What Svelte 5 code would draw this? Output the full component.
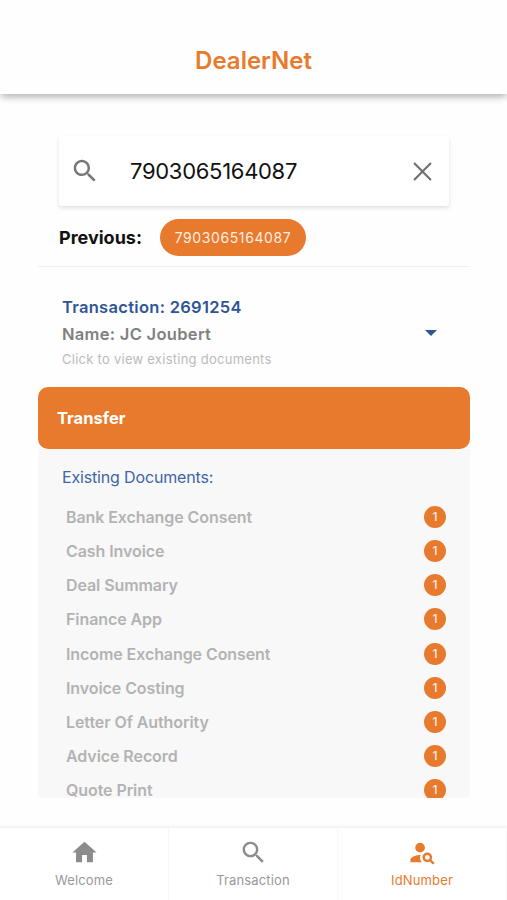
<script>
	let query = "7903065164087"
	let previous = ["7903065164087"]
	let activeTab = "IdNumber"

	const transaction = {
		number: "2691254",
		name: "JC Joubert",
		status: "Transfer",
	}

	const documents = [
		{name: "Bank Exchange Consent", count: 1},
		{name: "Cash Invoice", count: 1},
		{name: "Deal Summary", count: 1},
		{name: "Finance App", count: 1},
		{name: "Income Exchange Consent", count: 1},
		{name: "Invoice Costing", count: 1},
		{name: "Letter Of Authority", count: 1},
		{name: "Advice Record", count: 1},
		{name: "Quote Print", count: 1},
	]

	const searchPath =
		"M15.5 14h-.79l-.28-.27C15.41 12.59 16 11.11 16 9.5 16 5.91 13.09 3 9.5 3S3 5.91 3 9.5 5.91 16 9.5 16c1.61 0 3.09-.59 4.23-1.57l.27.28v.79l5 4.99L20.49 19l-4.99-5zm-6 0C7.01 14 5 11.99 5 9.5S7.01 5 9.5 5 14 7.01 14 9.5 11.99 14 9.5 14z"

	const tabs = [
		{label: "Welcome", path: "M10 20v-6h4v6h5v-8h3L12 3 2 12h3v8z"},
		{label: "Transaction", path: searchPath},
		{
			label: "IdNumber",
			path: "M10 4a4 4 0 1 0 0 8 4 4 0 0 0 0-8zM10.35 14.01C7.62 13.91 2 15.27 2 18v2h9.54c-2.47-2.76-1.23-5.89-1.19-5.99zM19.43 18.02c.36-.59.57-1.28.57-2.02 0-2.21-1.79-4-4-4s-4 1.79-4 4 1.79 4 4 4c.74 0 1.43-.22 2.02-.57L20.59 22 22 20.59l-2.57-2.57zM16 18c-1.1 0-2-.9-2-2s.9-2 2-2 2 .9 2 2-.9 2-2 2z",
		},
	]
</script>

<div class="app">
	<header>
		<h1>DealerNet</h1>
	</header>

	<main>
		<div class="search">
			<svg class="search-icon" viewBox="0 0 24 24"><path d={searchPath} /></svg>
			<input type="text" aria-label="Id number" bind:value={query} />
			<button class="clear" aria-label="Clear" on:click={() => (query = "")}>
				<svg viewBox="0 0 18 18"><path d="M1 1l16 16M17 1L1 17" /></svg>
			</button>
		</div>

		<div class="previous">
			<span class="previous-label">Previous:</span>
			{#each previous as id}
				<button class="chip" on:click={() => (query = id)}>{id}</button>
			{/each}
		</div>

		<section class="results">
			<div class="transaction">
				<div>
					<div class="number">Transaction: {transaction.number}</div>
					<div class="name">Name: {transaction.name}</div>
					<div class="hint">Click to view existing documents</div>
				</div>
				<span class="caret"></span>
			</div>

			<div class="status">{transaction.status}</div>

			<div class="documents">
				<h2>Existing Documents:</h2>
				<ul>
					{#each documents as doc}
						<li>
							<span>{doc.name}</span>
							<span class="badge">{doc.count}</span>
						</li>
					{/each}
				</ul>
			</div>
		</section>
	</main>

	<nav>
		{#each tabs as tab}
			<button
				class="tab"
				class:active={tab.label === activeTab}
				on:click={() => (activeTab = tab.label)}
			>
				<svg viewBox="0 0 24 24"><path d={tab.path} /></svg>
				<span>{tab.label}</span>
			</button>
		{/each}
	</nav>
</div>

<style>
	:global(body) {
		margin: 0;
	}

	.app {
		display: flex;
		flex-direction: column;
		height: 900px;
		overflow: hidden;
		background: #fefefe;
		font-family: Inter, "Liberation Sans", sans-serif;
	}

	.app * {
		box-sizing: border-box;
	}

	button {
		padding: 0;
		border: none;
		background: none;
		font-family: inherit;
	}

	header {
		flex: none;
		height: 94px;
		padding-top: 45px;
		background: #fefefe;
		box-shadow: 0 4px 7px -1px rgba(0, 0, 0, 0.3);
		text-align: center;
	}

	h1 {
		margin: 0;
		color: #e87a2e;
		font-size: 24px;
		font-weight: 600;
		line-height: 32px;
	}

	main {
		display: flex;
		flex: 1;
		flex-direction: column;
		min-height: 0;
		padding: 42px 37px 30px 38px;
	}

	.search {
		display: flex;
		flex: none;
		align-items: center;
		height: 70px;
		margin: 0 21px;
		padding: 0 17px 0 11px;
		border-radius: 3px;
		background: #fff;
		box-shadow: 0 2px 4px rgba(0, 0, 0, 0.12);
	}

	.search-icon {
		flex: none;
		width: 30px;
		height: 30px;
		fill: #777;
	}

	input {
		flex: 1;
		min-width: 0;
		margin-left: 30px;
		padding: 0;
		border: none;
		outline: none;
		background: none;
		color: #111;
		font-family: inherit;
		font-size: 22px;
		letter-spacing: -0.3px;
	}

	.clear {
		display: flex;
	}

	.clear svg {
		width: 19px;
		height: 19px;
		fill: none;
		stroke: #707070;
		stroke-width: 2;
	}

	.previous {
		display: flex;
		flex: none;
		align-items: center;
		height: 61px;
		padding-top: 2px;
		padding-left: 21px;
		border-bottom: 1px solid #efefef;
	}

	.previous-label {
		width: 101px;
		color: #111;
		font-size: 18px;
		font-weight: 700;
	}

	.chip {
		width: 146px;
		height: 37px;
		border-radius: 19px;
		background: #e87a2e;
		color: #fdeee2;
		font-size: 14px;
		letter-spacing: 0.6px;
	}

	.results {
		display: flex;
		flex: 1;
		flex-direction: column;
		min-height: 0;
	}

	.transaction {
		display: flex;
		flex: none;
		align-items: center;
		justify-content: space-between;
		height: 120px;
		padding: 11px 33px 0 24px;
	}

	.number,
	.name {
		font-size: 16.5px;
		font-weight: 600;
		line-height: 27px;
		letter-spacing: 0.3px;
	}

	.number {
		color: #2f5597;
	}

	.name {
		color: #808080;
	}

	.hint {
		color: #bbb;
		font-size: 13px;
		line-height: 23px;
		letter-spacing: 0.26px;
	}

	.caret {
		border: 6px solid transparent;
		border-top-color: #2f5597;
		border-bottom: none;
	}

	.status {
		flex: none;
		height: 62px;
		padding-left: 19px;
		border-radius: 10px;
		background: #e87a2e;
		color: #fff;
		font-size: 16.5px;
		font-weight: 700;
		line-height: 63px;
	}

	.documents {
		flex: 1;
		min-height: 0;
		padding: 17px 24px 0;
		border-radius: 0 0 4px 4px;
		background: #f8f8f8;
		overflow: hidden;
	}

	h2 {
		margin: 0 0 12px;
		color: #3e65a5;
		font-size: 16px;
		font-weight: 400;
		line-height: 22px;
		letter-spacing: -0.16px;
	}

	ul {
		margin: 0;
		padding: 0 0 0 4px;
		list-style: none;
	}

	li {
		display: flex;
		align-items: center;
		justify-content: space-between;
		height: 34.15px;
		color: #b3b3b3;
		font-size: 16px;
		font-weight: 600;
		letter-spacing: -0.08px;
	}

	.badge {
		width: 22px;
		height: 22px;
		border-radius: 50%;
		background: #e87a2e;
		color: #fdeee2;
		font-size: 12px;
		font-weight: 500;
		line-height: 22px;
		text-align: center;
	}

	nav {
		display: flex;
		flex: none;
		height: 72px;
		background: #fff;
		box-shadow: 0 -1px 3px rgba(0, 0, 0, 0.08);
	}

	.tab {
		display: flex;
		flex: 1;
		flex-direction: column;
		align-items: center;
		padding-top: 10px;
		border-right: 1px solid #f8f8f8;
		color: #999;
		font-size: 13px;
		line-height: 24px;
		letter-spacing: 0.15px;
	}

	.tab svg {
		width: 29px;
		height: 29px;
		margin-bottom: 1px;
		fill: #8c8c8c;
	}

	.tab.active {
		color: #e87a2e;
	}

	.tab.active svg {
		fill: #e87a2e;
	}
</style>
